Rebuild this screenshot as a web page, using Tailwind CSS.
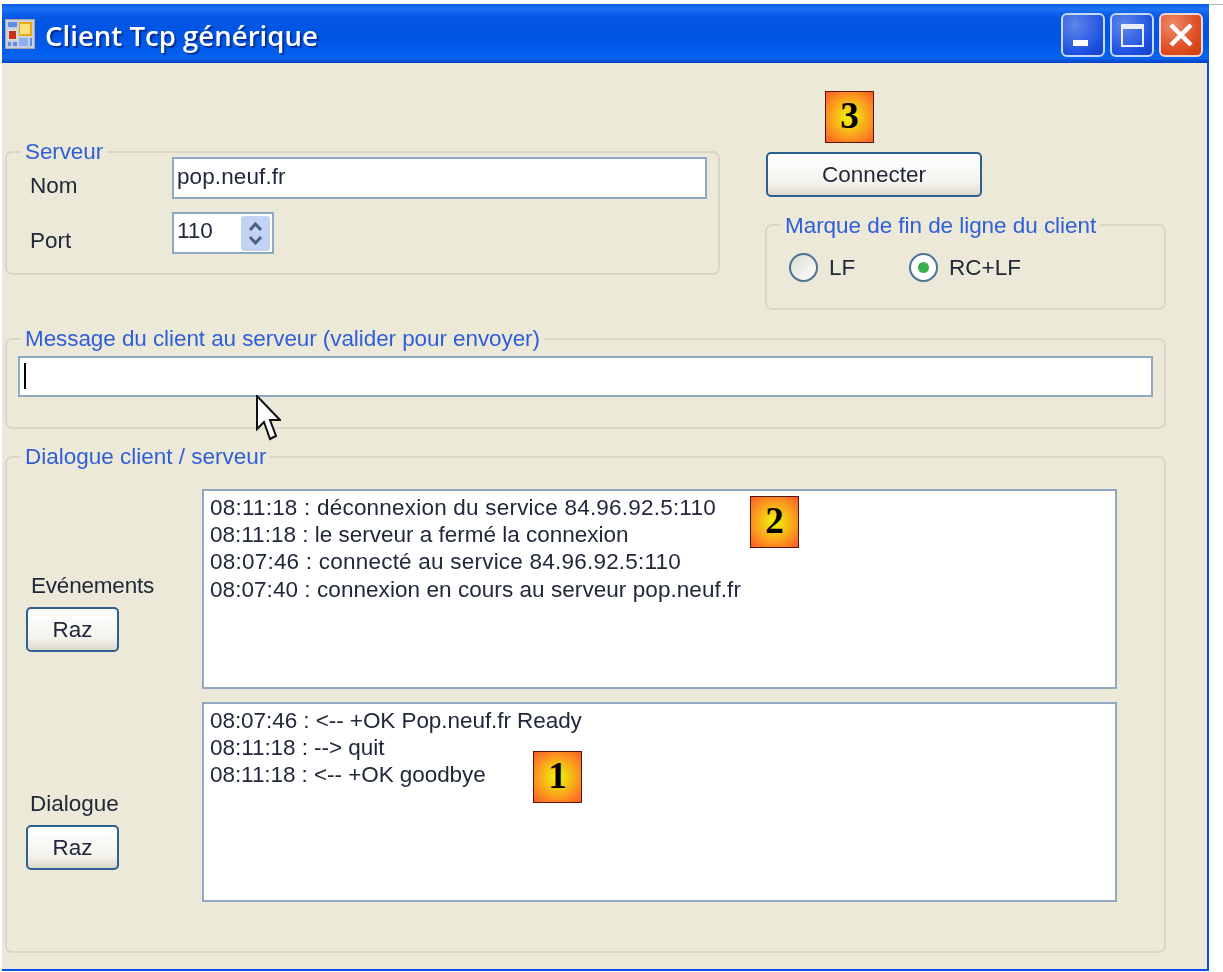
<!DOCTYPE html>
<html><head><meta charset="utf-8"><script src="https://cdn.jsdelivr.net/npm/@tailwindcss/browser@4"></script></head>
<body class="bg-white m-0">
<div class="relative w-[1223px] h-[972px] overflow-hidden font-['Liberation_Sans',sans-serif] text-[#20283a] text-[22.5px]">
 <div class="absolute left-[1209px] top-[4px] w-[14px] h-px bg-[#b5b5b5]"></div>
 <div class="ml-[2px] pt-[4px] w-[1207px] h-[971px] flex flex-col blur-[0.5px]">
  <div class="h-[59px] shrink-0 flex items-center pl-[3px] pr-[4px] bg-[linear-gradient(180deg,#0a5ce6_0%,#1d73f4_8%,#0457e4_22%,#0054e3_55%,#0260ef_85%,#0a62ee_92%,#0040c0_100%)]">
   <svg class="w-[30px] h-[30px] shrink-0" viewBox="0 0 30 30"><rect x="0.5" y="0.5" width="29" height="29" fill="#c9cfdc" stroke="#a9a9a0"/><rect x="3" y="3" width="9" height="5" fill="#5a8ee8"/><rect x="3" y="10" width="9" height="11" fill="#d8ddd8"/><rect x="4" y="12" width="7" height="8" fill="#c8301c"/><rect x="3" y="23" width="3" height="4" fill="#5a8ee8"/><rect x="8" y="23" width="4" height="4" fill="#5a8ee8"/><rect x="14" y="3" width="13" height="14" fill="#e8a818"/><rect x="15" y="5" width="10" height="10" fill="#fbe27a"/><rect x="14" y="19" width="9" height="8" fill="#8ab0f0"/><rect x="25" y="19" width="2" height="8" fill="#5a8ee8"/></svg>
   <div class="ml-[10px] pt-[5px] text-white font-['Open_Sans',sans-serif] font-semibold text-[27.6px] leading-none [text-shadow:2px_2px_1px_#00309c]">Client Tcp générique</div>
   <div class="ml-auto flex gap-[5px] mr-[2px] mt-[3px]">
    <div class="w-[44px] h-[44px] rounded-[6px] border-2 border-[#c8d8fa] bg-[radial-gradient(circle_at_30%_25%,#5f86e8,#1d50e0_70%,#1640c8)] flex items-end pl-[10px] pb-[9px]"><div class="w-[15px] h-[6px] bg-white"></div></div>
    <div class="w-[44px] h-[44px] rounded-[6px] border-2 border-[#c8d8fa] bg-[radial-gradient(circle_at_30%_25%,#5f86e8,#1d50e0_70%,#1640c8)] flex items-center justify-center"><div class="w-[23px] h-[23px] border-2 border-t-[5px] border-[#e8eefc]"></div></div>
    <div class="w-[44px] h-[44px] rounded-[6px] border-2 border-[#f0d8d0] bg-[radial-gradient(circle_at_30%_25%,#ec8a68,#df4f24_60%,#d03c08)] flex items-center justify-center"><svg class="w-[26px] h-[26px]" viewBox="0 0 26 26"><path d="M3 3 L23 23 M23 3 L3 23" stroke="#fff" stroke-width="4.5"/></svg></div>
   </div>
  </div>
  <div class="flex-1 bg-[#ece9d8] border-r-2 border-b-2 border-[#0b4fe6] pl-[3px]">
    <div class="flex items-start pt-[88px]">
     <div class="relative w-[715px] h-[124px] border-2 border-[#d9d7c7] rounded-[7px] flex flex-col">
      <span class="absolute -top-[14px] left-[14px] px-[4px] bg-[#ece9d8] text-[#2f5fd8] leading-[26px] tracking-[-0.1px]">Serveur</span>
      <div class="flex items-start pl-[23px] pt-[4px] h-[59px]"><span class="w-[142px] mt-[16px] leading-[26px]">Nom</span><div class="w-[535px] h-[42px] bg-white border-2 border-[#8fa9c4] pl-[3px] leading-[36px] tracking-[0.1px]">pop.neuf.fr</div></div>
      <div class="flex items-start pl-[23px]"><span class="w-[142px] mt-[16px] leading-[26px]">Port</span><div class="w-[102px] h-[42px] bg-white border-2 border-[#8fa9c4] pl-[3px] leading-[29px] flex justify-between pr-[2px] py-[2px]"><span>110</span><span class="w-[29px] h-[35px] rounded-[3px] bg-[#c3d3f3] flex flex-col items-center justify-center gap-[5px]"><svg class="w-[15px] h-[9px]" viewBox="0 0 15 9"><path d="M2 8 L7.5 2 L13 8" stroke="#4d6185" stroke-width="3" fill="none"/></svg><svg class="w-[15px] h-[9px]" viewBox="0 0 15 9"><path d="M2 1 L7.5 7 L13 1" stroke="#4d6185" stroke-width="3" fill="none"/></svg></span></div></div>
     </div>
     <div class="ml-[45px] mt-[1px] w-[401px] flex flex-col">
      <div class="w-[216px] ml-[1px] h-[45px] rounded-[5px] border-2 border-[#2d5f8f] bg-[linear-gradient(180deg,#ffffff,#f4f3ee_70%,#dcd9cc)] flex items-center justify-center pt-[1px]">Connecter</div>
      <div class="relative mt-[27px] h-[86px] border-2 border-[#d9d7c7] rounded-[7px] flex items-center pl-[22px] pt-[1px]">
       <span class="absolute -top-[13px] left-[14px] px-[4px] bg-[#ece9d8] text-[#2f5fd8] leading-[26px] tracking-[-0.05px]">Marque de fin de ligne du client</span>
       <span class="w-[29px] h-[29px] rounded-full border-[2.5px] border-[#4b7596] bg-[linear-gradient(135deg,#dcdad0,#ffffff)]"></span><span class="ml-[11px] w-[80px]">LF</span>
       <span class="w-[29px] h-[29px] rounded-full border-[2.5px] border-[#4b7596] bg-white flex items-center justify-center"><span class="w-[11px] h-[11px] rounded-full bg-[#36b04c]"></span></span><span class="ml-[11px]">RC+LF</span>
      </div>
     </div>
    </div>
    <div class="relative mt-[28px] w-[1161px] h-[91px] border-2 border-[#d9d7c7] rounded-[7px] pt-[16px] pl-[11px]">
     <span class="absolute -top-[14px] left-[14px] px-[4px] bg-[#ece9d8] text-[#2f5fd8] leading-[26px] tracking-[-0.08px]">Message du client au serveur (valider pour envoyer)</span>
     <div class="w-[1135px] h-[41px] bg-white border-2 border-[#8fa9c4] pl-[4px] pt-[5px]"><div class="w-[2px] h-[26px] bg-black"></div></div>
     <svg class="absolute left-[248px] top-[55px] w-[26px] h-[48px]" viewBox="0 0 26 48"><path d="M2 1 L2 34 L9 27 L15 44 L21 41 L15 25 L25 25 Z" fill="#fff" stroke="#111" stroke-width="2"/></svg>
    </div>
    <div class="relative mt-[27px] w-[1161px] h-[497px] border-2 border-[#d9d7c7] rounded-[7px] pt-[31px] pl-[195px]">
     <span class="absolute -top-[14px] left-[14px] px-[4px] bg-[#ece9d8] text-[#2f5fd8] leading-[26px]">Dialogue client / serveur</span>
     <div class="relative w-[915px] h-[200px] bg-white border-2 border-[#8fa9c4] pl-[6px] pt-[3px] leading-[27.2px]">
      <div class="tracking-[0.21px]">08:11:18 : déconnexion du service 84.96.92.5:110</div><div>08:11:18 : le serveur a fermé la connexion</div><div class="tracking-[0.22px]">08:07:46 : connecté au service 84.96.92.5:110</div><div class="tracking-[0.06px]">08:07:40 : connexion en cours au serveur pop.neuf.fr</div>
      <div class="absolute -left-[173px] top-[82px] w-[130px] leading-[26px] tracking-[-0.2px]">Evénements</div>
      <div class="absolute -left-[178px] top-[116px] w-[93px] h-[45px] rounded-[5px] border-2 border-[#2d5f8f] bg-[linear-gradient(180deg,#ffffff,#f4f3ee_70%,#dcd9cc)] flex items-center justify-center">Raz</div>
     </div>
     <div class="relative mt-[13px] w-[915px] h-[200px] bg-white border-2 border-[#8fa9c4] pl-[6px] pt-[3px] leading-[27.2px]">
      <div class="tracking-[-0.06px]">08:07:46 : &lt;-- +OK Pop.neuf.fr Ready</div><div class="tracking-[-0.05px]">08:11:18 : --&gt; quit</div><div class="tracking-[-0.06px]">08:11:18 : &lt;-- +OK goodbye</div>
      <div class="absolute -left-[174px] top-[87px] w-[130px] leading-[26px]">Dialogue</div>
      <div class="absolute -left-[178px] top-[121px] w-[93px] h-[45px] rounded-[5px] border-2 border-[#2d5f8f] bg-[linear-gradient(180deg,#ffffff,#f4f3ee_70%,#dcd9cc)] flex items-center justify-center">Raz</div>
     </div>
    </div>
  </div>
 </div>
 <div class="absolute left-[825px] top-[91px] w-[49px] h-[52px] border border-[#5a1508] bg-[radial-gradient(circle,#f0ea0a_10%,#fb9a1e_60%,#fb5a28)] flex items-center justify-center pb-[4px] font-['Liberation_Serif',serif] font-bold text-[37px] leading-none text-black">3</div>
 <div class="absolute left-[750px] top-[496px] w-[49px] h-[52px] border border-[#5a1508] bg-[radial-gradient(circle,#f0ea0a_10%,#fb9a1e_60%,#fb5a28)] flex items-center justify-center pb-[4px] font-['Liberation_Serif',serif] font-bold text-[37px] leading-none text-black">2</div>
 <div class="absolute left-[533px] top-[751px] w-[49px] h-[52px] border border-[#5a1508] bg-[radial-gradient(circle,#f0ea0a_10%,#fb9a1e_60%,#fb5a28)] flex items-center justify-center pb-[4px] font-['Liberation_Serif',serif] font-bold text-[37px] leading-none text-black">1</div>
</div>
</body></html>
